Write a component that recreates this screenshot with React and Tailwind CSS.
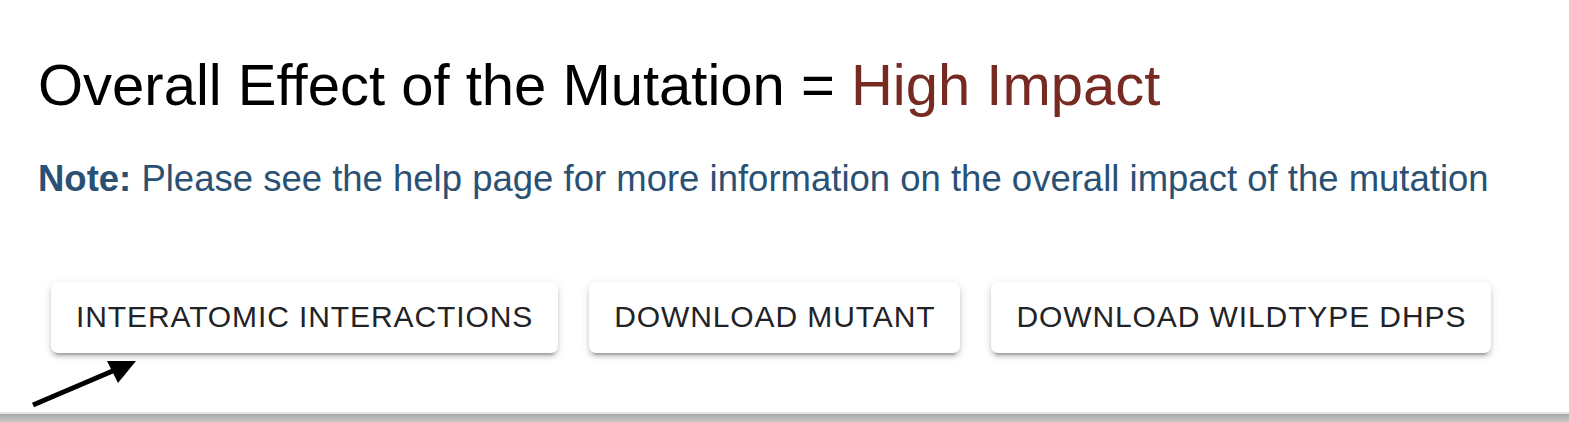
import React from 'react';

const buttons = ['INTERATOMIC INTERACTIONS', 'DOWNLOAD MUTANT', 'DOWNLOAD WILDTYPE DHPS'];

export default function App() {
  return (
    <div className="relative w-[1569px] h-[422px] flex flex-col bg-white overflow-hidden" style={{ fontFamily: '"Liberation Sans", Arial, sans-serif' }}>
      <div className="flex-1 pl-[38px]">
        {/* Heading */}
        <h1 className="mt-[56px] text-[58px] leading-[58px] font-normal text-black">
          Overall Effect of the Mutation = <span className="text-[#762a22]">High Impact</span>
        </h1>
        {/* Note */}
        <p className="mt-[47px] text-[36.5px] leading-[36px] text-[#2a5174]">
          <span className="font-bold">Note:</span> Please see the help page for more information on the overall impact of the mutation
        </p>
        {/* Action buttons */}
        <div className="mt-[85px] ml-[13px] flex gap-[31px]">
          {buttons.map((label) => (
            <button
              key={label}
              className="h-[71px] px-[25px] pb-[2px] flex items-center rounded-[7px] bg-white text-[30px] tracking-[0.9px] text-[#222326] shadow-[0_6px_2px_-4px_rgba(0,0,0,0.2),0_4px_4px_0_rgba(0,0,0,0.14),0_2px_10px_0_rgba(0,0,0,0.12)]"
            >
              {label}
            </button>
          ))}
        </div>
      </div>
      {/* Bottom bar */}
      <div className="h-[10px] border-t-2 border-[#e3e3e3] bg-gradient-to-b from-[#a9a9a9] to-[#c8c8c8]" />
      {/* Annotation arrow */}
      <svg className="absolute left-0 top-0 pointer-events-none" width="1569" height="422">
        <line x1="33" y1="405" x2="115" y2="370" stroke="#000" strokeWidth="5" />
        <polygon points="136,361 107,361 118,383" fill="#000" />
      </svg>
    </div>
  );
}
